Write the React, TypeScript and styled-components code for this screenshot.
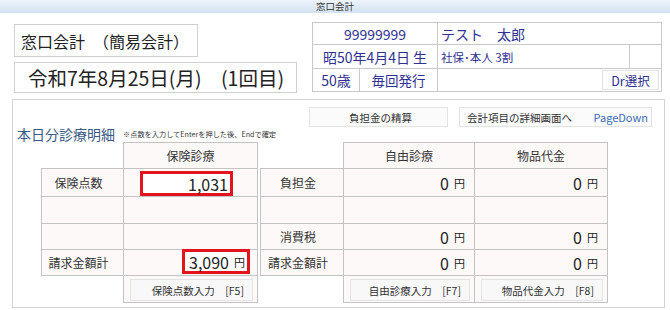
import styled, { createGlobalStyle } from "styled-components";

/***** Global ******/
const GlobalStyle = createGlobalStyle`
  html, body {
    margin: 0;
    padding: 0;
    background: #ffffff;
  }
  body {
    font-family: "Noto Sans CJK JP", "Noto Sans", sans-serif;
    color: #333333;
  }
  * {
    box-sizing: border-box;
  }
`;

/***** Styled ******/
const Page = styled.div`
  width: 670px;
  height: 310px;
  overflow: hidden;
`;

const TitleBar = styled.div`
  height: 13px;
  background: linear-gradient(#edf3fa, #d4e2f2);
  font-size: 9.5px;
  line-height: 13px;
  text-align: center;
  color: #333;
`;

const Header = styled.header`
  height: 86px;
  display: flex;
  align-items: flex-start;
  gap: 15px;
  padding: 9px 0 0 14px;
`;

const LeftCol = styled.div`
  width: 283px;
  margin-top: 2px;
  display: flex;
  flex-direction: column;
  align-items: flex-start;
  gap: 5px;
`;

const TitleBox = styled.div<{ $w: number; $h: number; $size: number; $pad: number }>`
  width: ${(p) => p.$w}px;
  height: ${(p) => p.$h}px;
  border: 1px solid #cfcfcf;
  display: flex;
  align-items: center;
  padding-left: ${(p) => p.$pad}px;
  font-size: ${(p) => p.$size}px;
  color: #222;
  white-space: nowrap;
`;

const InfoTable = styled.div`
  width: 350px;
  display: grid;
  grid-template-columns: 47px 78px 192px 32px;
  grid-template-rows: 22px 24px 23px;
  border-top: 1px solid #c9c9c9;
  border-left: 1px solid #c9c9c9;
`;

const InfoCell = styled.div<{ $span?: string; $align?: string; $size?: number }>`
  grid-column: ${(p) => p.$span || "auto"};
  border-right: 1px solid #c9c9c9;
  border-bottom: 1px solid #c9c9c9;
  display: flex;
  align-items: center;
  justify-content: ${(p) => p.$align || "center"};
  padding: 0 3px;
  font-size: ${(p) => p.$size || 13.5}px;
  color: #2e3192;
  white-space: nowrap;
`;

const DrButton = styled.div`
  width: 57px;
  height: 20px;
  margin-right: -1px;
  border: 1px solid #e2e2e2;
  background: #fdfdfd;
  display: flex;
  align-items: center;
  justify-content: center;
  font-size: 12.5px;
  color: #2e3192;
`;

const Panel = styled.section`
  margin-left: 12px;
  width: 653px;
  height: 209px;
  border: 1px solid #d2d2d2;
  padding-top: 7px;
`;

const ButtonRow = styled.div`
  display: flex;
  justify-content: flex-end;
  gap: 11px;
  padding-right: 12px;
`;

const TopButton = styled.div<{ $w: number }>`
  width: ${(p) => p.$w}px;
  height: 20px;
  border: 1px solid #e3e3e3;
  background: #fbfbfb;
  display: flex;
  align-items: center;
  justify-content: space-between;
  padding: 0 3px 0 7px;
  font-size: 10.5px;
  color: #333;
  white-space: nowrap;
`;

const CenterLabel = styled.span`
  flex: 1;
  text-align: center;
`;

const KeyHint = styled.span`
  color: #3b6cb3;
  font-size: 11px;
`;

const Caption = styled.div`
  height: 15px;
  display: flex;
  align-items: flex-end;
  gap: 8px;
  padding-left: 4px;
`;

const CaptionTitle = styled.span`
  font-size: 14px;
  line-height: 15px;
  color: #3a5a86;
  white-space: nowrap;
`;

const Note = styled.span`
  font-size: 7.2px;
  line-height: 12px;
  color: #333;
  white-space: nowrap;
  margin-bottom: 2px;
`;

const Grid = styled.div`
  margin-left: 28px;
  display: grid;
  grid-template-columns: 82px 134px 3px 83px 131px 133px;
  grid-template-rows: 26px 28px 27px 26px 26px 27px;
`;

const Cell = styled.div<{ $col: number; $row: number; $kind?: "head" | "label" | "value" | "input" | "button" }>`
  grid-column: ${(p) => p.$col};
  grid-row: ${(p) => p.$row};
  margin: 0 -1px -1px 0;
  border: 1px solid #c3c3c3;
  background: #fdf9f8;
  display: flex;
  font-size: 12px;
  color: #333;
  white-space: nowrap;
  ${(p) =>
    p.$kind === "head" || p.$kind === "label"
      ? `align-items: center; justify-content: center;`
      : ""}
  ${(p) => (p.$kind === "label" ? `padding-right: 8px;` : "")}
  ${(p) =>
    p.$kind === "value"
      ? `align-items: center; justify-content: flex-end; padding-right: 9px;`
      : ""}
  ${(p) => (p.$kind === "button" ? `padding: 3px 4px 1px 6px;` : "")}
`;

const RedInput = styled.div<{ $w: number; $mr: number; $mt: number }>`
  width: ${(p) => p.$w}px;
  height: 25px;
  margin: ${(p) => p.$mt}px ${(p) => p.$mr}px 0 auto;
  border: 3px solid #e3141d;
  background: #ffffff;
  display: flex;
  align-items: center;
  justify-content: flex-end;
  padding-right: 2px;
  font-size: 16px;
  color: #222;
`;

const Amount = styled.span`
  font-size: 16px;
  color: #222;
`;

const Yen = styled.span`
  font-size: 11px;
  margin-left: 5px;
  color: #222;
`;

const FnButton = styled.div`
  flex: 1;
  border: 1px solid #e4e4e4;
  background: #f8f8f8;
  display: flex;
  align-items: center;
  justify-content: flex-end;
  padding-right: 8px;
  font-size: 10.5px;
  color: #333;
`;

/***** Data ******/
const headers = [
  { col: 2, text: "保険診療" },
  { col: 5, text: "自由診療" },
  { col: 6, text: "物品代金" },
];

const leftLabels = ["保険点数", "", "", "請求金額計"];
const rightLabels = ["負担金", "", "消費税", "請求金額計"];
const freeValues = ["0", "", "0", "0"];

const fnButtons = [
  { col: 2, text: "保険点数入力　[F5]" },
  { col: 5, text: "自由診療入力　[F7]" },
  { col: 6, text: "物品代金入力　[F8]" },
];

function App() {
  return (
    <>
      <GlobalStyle />
      <Page>
        <TitleBar>窓口会計</TitleBar>

        <Header>
          <LeftCol>
            <TitleBox $w={184} $h={33} $size={16} $pad={6}>
              窓口会計　（簡易会計）
            </TitleBox>
            <TitleBox $w={283} $h={31} $size={19.5} $pad={13}>
              令和7年8月25日(月)　(1回目)
            </TitleBox>
          </LeftCol>

          <InfoTable>
            <InfoCell $span="1 / 3" $size={14}>99999999</InfoCell>
            <InfoCell $span="3 / 5" $align="flex-start" $size={14}>
              テスト　太郎
            </InfoCell>
            <InfoCell $span="1 / 3" $size={14}>昭50年4月4日 生</InfoCell>
            <InfoCell $align="flex-start" $size={11.5}>
              社保･本人 3割
            </InfoCell>
            <InfoCell />
            <InfoCell $size={14}>50歳</InfoCell>
            <InfoCell>毎回発行</InfoCell>
            <InfoCell $span="3 / 5" $align="flex-end">
              <DrButton>Dr選択</DrButton>
            </InfoCell>
          </InfoTable>
        </Header>

        <Panel>
          <ButtonRow>
            <TopButton $w={139}>
              <CenterLabel>負担金の精算</CenterLabel>
            </TopButton>
            <TopButton $w={193}>
              <span>会計項目の詳細画面へ</span>
              <KeyHint>PageDown</KeyHint>
            </TopButton>
          </ButtonRow>

          <Caption>
            <CaptionTitle>本日分診療明細</CaptionTitle>
            <Note>※点数を入力してEnterを押した後、Endで確定</Note>
          </Caption>

          <Grid>
            {headers.map((h) => (
              <Cell key={h.col} $col={h.col} $row={1} $kind="head">
                {h.text}
              </Cell>
            ))}

            {leftLabels.map((label, i) => (
              <Cell key={`l${i}`} $col={1} $row={i + 2} $kind="label">
                {label}
              </Cell>
            ))}

            <Cell $col={2} $row={2}>
              <RedInput $w={93} $mr={24} $mt={2}>
                1,031
              </RedInput>
            </Cell>
            <Cell $col={2} $row={3} />
            <Cell $col={2} $row={4} />
            <Cell $col={2} $row={5}>
              <RedInput $w={68} $mr={7} $mt={-1}>
                3,090<Yen>円</Yen>
              </RedInput>
            </Cell>

            {rightLabels.map((label, i) => (
              <Cell key={`r${i}`} $col={4} $row={i + 2} $kind="label">
                {label}
              </Cell>
            ))}

            {[5, 6].map((col) =>
              freeValues.map((v, i) => (
                <Cell key={`${col}-${i}`} $col={col} $row={i + 2} $kind="value">
                  {v && (
                    <>
                      <Amount>{v}</Amount>
                      <Yen>円</Yen>
                    </>
                  )}
                </Cell>
              ))
            )}

            {fnButtons.map((b) => (
              <Cell key={`b${b.col}`} $col={b.col} $row={6} $kind="button">
                <FnButton>{b.text}</FnButton>
              </Cell>
            ))}
          </Grid>
        </Panel>
      </Page>
    </>
  );
}

export default App;
